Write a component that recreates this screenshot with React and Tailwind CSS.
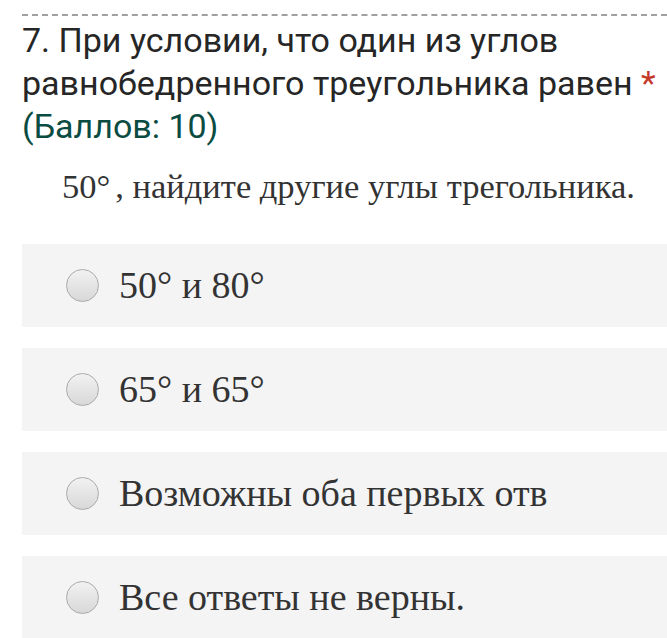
export default function App() {
  const options = ['50° и 80°', '65° и 65°', 'Возможны оба первых отв', 'Все ответы не верны.'];

  return (
    <div className="w-[667px] h-[638px] overflow-hidden bg-white">
      <div className="ml-[22px] mt-[14px] border-t-2 border-dashed border-[#a0a0a0]">
        <div className="pt-[3px] font-['Roboto',sans-serif] text-[34px] leading-[43px] text-[#262626] whitespace-nowrap">
          <div>7. При условии, что один из углов</div>
          <div>
            равнобедренного треугольника равен <span className="text-[#c53929]">*</span>
          </div>
          <div className="text-[#0b4c42]">(Баллов: 10)</div>
        </div>
        <div className="mt-[20px] ml-[40px] font-['Liberation_Serif',serif] text-[34.5px] leading-[36px] text-[#333] whitespace-nowrap">
          50°<span className="ml-[5px]">,</span> найдите другие углы трегольника.
        </div>
        <div className="mt-[40px] flex flex-col gap-[21px]">
          {options.map((label) => (
            <div key={label} className="h-[83px] bg-[#f4f4f4] flex items-center pl-[44px]">
              <span className="w-[33px] h-[33px] rounded-full border border-[#aaa] bg-gradient-to-b from-[#f2f2f2] to-[#d8d8d8] shrink-0" />
              <span className="ml-[20px] font-['Liberation_Serif',serif] text-[38px] text-[#333] whitespace-nowrap">
                {label}
              </span>
            </div>
          ))}
        </div>
      </div>
    </div>
  );
}
